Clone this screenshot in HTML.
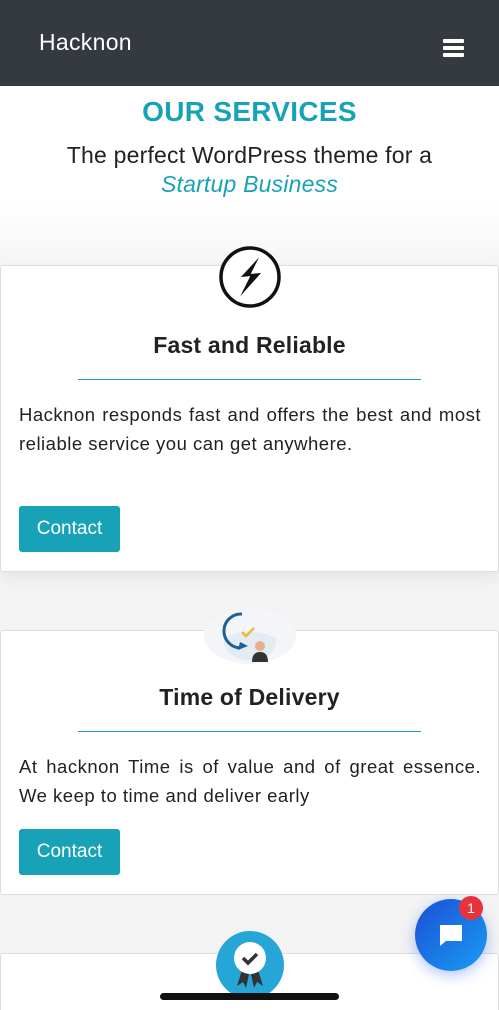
<!DOCTYPE html>
<html><head><meta charset="utf-8"><style>
*{margin:0;padding:0;box-sizing:border-box}
html,body{width:499px;height:1010px;overflow:hidden}
body{font-family:"Liberation Sans",sans-serif;background:#fff;position:relative}
.hdr{position:absolute;left:0;top:0;width:499px;height:86px;background:#343a40}
.hdr .t{position:absolute;left:39px;top:29px;color:#fff;font-size:23px;letter-spacing:.3px}
.hb{position:absolute;left:443px;width:21px;height:4px;background:#fff;border-radius:1px}
.bg{position:absolute;left:0;top:200px;width:499px;height:810px;background:linear-gradient(#fff,#f3f3f3 80px,#f3f3f3)}
.h1{position:absolute;top:96px;width:499px;text-align:center;color:#17a2b8;font-weight:bold;font-size:28px;letter-spacing:.3px}
.h2{position:absolute;top:141px;width:499px;text-align:center;color:#222;font-size:23px;line-height:29px;letter-spacing:.2px}
.h2 i{color:#17a2b8}
.card{position:absolute;left:0;width:499px;background:#fff;border:1px solid #ddd;border-radius:3px}
.ct{position:absolute;width:499px;text-align:center;font-weight:bold;font-size:23px;color:#222;letter-spacing:.2px}
.ln{position:absolute;left:78px;width:343px;height:1px;background:#17a2b8}
.tx{position:absolute;left:19px;width:462px;font-size:18.5px;line-height:29px;color:#222;text-align:justify;letter-spacing:.5px}
.btn{position:absolute;left:19px;width:101px;height:46px;background:#17a2b8;color:#fff;font-size:19px;line-height:46px;text-align:center;border-radius:3px}
</style></head><body>
<div class="bg"></div>
<div class="hdr"><div class="t">Hacknon</div>
<div class="hb" style="top:39px"></div><div class="hb" style="top:46px"></div><div class="hb" style="top:53px"></div></div>
<div class="h1">OUR SERVICES</div>
<div class="h2">The perfect WordPress theme for a<br><i>Startup Business</i></div>

<div class="card" style="top:265px;height:307px;box-shadow:0 6px 14px rgba(0,0,0,.06)"></div>
<svg style="position:absolute;left:217px;top:244px" width="66" height="66" viewBox="0 0 66 66"><circle cx="33" cy="33" r="29" fill="#fff" stroke="#111" stroke-width="3.5"/><path d="M45 9 L22 34 L32 33 L20 57 L46 28 L35 29Z" fill="#111" stroke="#fff" stroke-width="1.5"/></svg>
<div class="ct" style="top:332px">Fast and Reliable</div>
<div class="ln" style="top:379px"></div>
<div class="tx" style="top:400px">Hacknon responds fast and offers the best and most reliable service you can get anywhere.</div>
<div class="btn" style="top:506px">Contact</div>

<div class="card" style="top:630px;height:265px"></div>
<svg style="position:absolute;left:204px;top:608px" width="92" height="56" viewBox="0 0 92 56"><ellipse cx="46" cy="28" rx="46" ry="28" fill="#f3f5f8"/><path d="M20 30 Q46 18 72 30 Q72 52 46 52 Q20 52 20 30Z" fill="#e3ebf3"/><path d="M38 6 A17 17 0 0 0 36 40" fill="none" stroke="#1e5f95" stroke-width="3"/><path d="M34 42 L44 38 L36 34Z" fill="#1e5f95"/><path d="M38 24 L42 28 L50 20" fill="none" stroke="#f0b640" stroke-width="2.5"/><circle cx="56" cy="38" r="5" fill="#e8b08a"/><path d="M48 54 Q48 44 56 44 Q64 44 64 54Z" fill="#333"/></svg>
<div class="ct" style="top:684px">Time of Delivery</div>
<div class="ln" style="top:731px"></div>
<div class="tx" style="top:752px">At hacknon Time is of value and of great essence. We keep to time and deliver early</div>
<div class="btn" style="top:829px">Contact</div>

<div class="card" style="top:953px;height:80px"></div>
<svg style="position:absolute;left:215px;top:930px" width="70" height="70" viewBox="0 0 70 70"><circle cx="35" cy="35" r="34" fill="#26a6d6"/><path d="M27 40 L22 56 L28 52 L31 58 L34 44Z M43 40 L48 56 L42 52 L39 58 L36 44Z" fill="#333"/><circle cx="35" cy="28" r="16" fill="#fff"/><path d="M28 28 L33 33 L42 24" fill="none" stroke="#333" stroke-width="3.5"/></svg>
<div style="position:absolute;left:160px;top:993px;width:179px;height:7px;border-radius:4px;background:#111"></div>

<div style="position:absolute;left:415px;top:899px;width:72px;height:72px;border-radius:50%;background:linear-gradient(135deg,#1b4fd6,#1a9cf2);box-shadow:0 4px 14px rgba(30,90,240,.35)"></div>
<svg style="position:absolute;left:437px;top:921px" width="28" height="28" viewBox="0 0 28 28"><path d="M3 4 H25 V20 H9 L3 25Z" fill="#fff"/></svg>
<div style="position:absolute;left:459px;top:896px;width:24px;height:24px;border-radius:50%;background:#e8323c;color:#fff;font-size:14px;line-height:24px;text-align:center">1</div>
</body></html>
